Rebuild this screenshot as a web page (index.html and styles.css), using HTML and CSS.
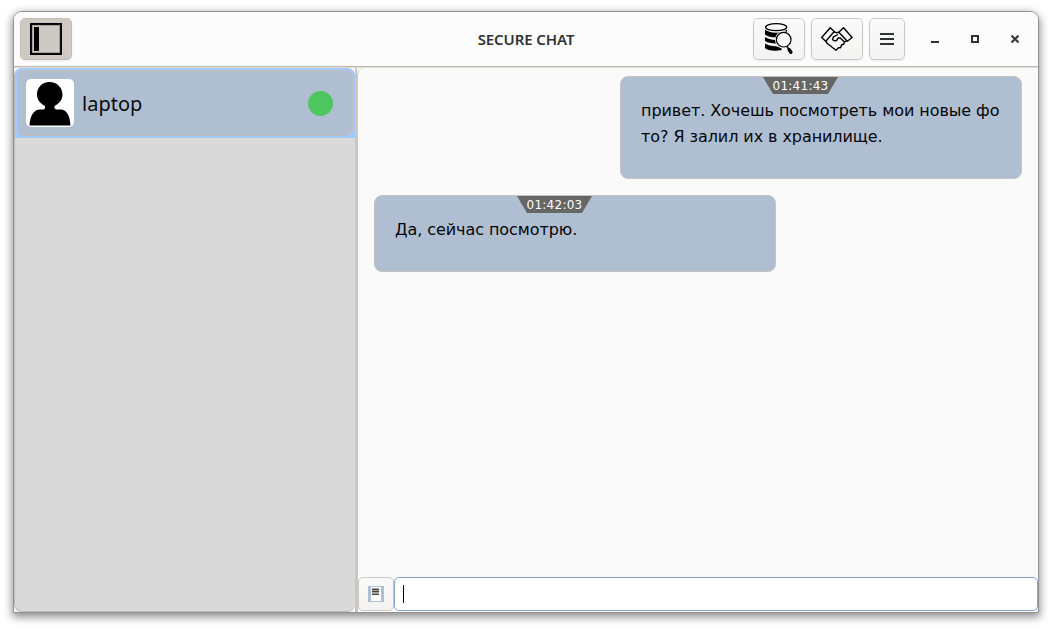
FILE: index.html
```html
<!DOCTYPE html>
<html lang="ru">
<head>
<meta charset="utf-8">
<title>Secure Chat</title>
<link rel="stylesheet" href="styles.css">
</head>
<body>
<div class="window">
  <header class="header">
    <div class="side start">
      <button class="btn active" aria-label="Sidebar">
        <svg width="32" height="32" viewBox="0 0 32 32"><path fill="none" stroke="#000" stroke-width="2" d="M1 1h30v30H1z"/><path fill="none" stroke="#77736f" stroke-width=".6" d="M2.3 2.3h27.4v27.4H2.3z"/><path d="M4 4h5v24H4z"/></svg>
      </button>
    </div>
    <h1 class="title">SECURE CHAT</h1>
    <div class="side end">
      <button class="btn" aria-label="Storage">
        <svg width="32" height="34" viewBox="0 0 32 34"><path d="M2 7.500c2 2 6 3.200 11 3.200s9-1.200 11-3.200v5l-10 3C8 15.500 4 14.500 2 12.500zM2 15c2 1.500 6 3 11 3v3.500C8 21.500 4 20.500 2 19zM2 21.500c2 1.500 6 2.500 12 3l4 1.500 1 2c-7 1.500-15 .5-17-2z"/><ellipse cx="13.200" cy="5.200" rx="10.500" ry="3.500" fill="#faf9f8" stroke="#000" stroke-width="1.300"/><circle cx="20.700" cy="17.700" r="8.700" fill="#faf9f8"/><circle cx="20.700" cy="17.700" r="7.300" fill="#faf9f8" stroke="#000" stroke-width="1.200"/><path stroke="#000" stroke-width="1.400" d="M24 24.500l2 3"/><path stroke="#000" stroke-width="3.400" stroke-linecap="round" d="M26.200 27.700l1.700 2.600"/></svg>
      </button>
      <button class="btn" aria-label="Connect">
        <svg width="32" height="32" viewBox="0 0 32 32" fill="none" stroke="#000" stroke-width="1.400" stroke-linejoin="round"><path d="M9.200 4.700l4.100 3.800-8.600 9.800-4-3.800zM22.500 4.700l-4.700 4.500 8.500 9.100 4.800-3.800zM13.300 9l2.200.7 2.800-.7M5.500 17.500v2.300l1.800 1.500L15 27.300l2.500-2.500h2l1.200-3 2-.5.800-2.500 2.500-1.300M17 11.500l-4.500 2.300-1 2.700 1.500 1.300 2.500-.300 1.700-2.500h2l4.300 4"/></svg>
      </button>
      <button class="btn narrow" aria-label="Menu">
        <svg width="14" height="12" viewBox="0 0 14 12"><path fill="#2e3436" d="M0 0h14v2H0zM0 5h14v2H0zM0 10h14v2H0z"/></svg>
      </button>
      <div class="controls">
        <svg width="8" height="8" viewBox="0 0 8 8"><path fill="#2e3436" d="M0 6h8v2H0z"/></svg>
        <svg width="8" height="8" viewBox="0 0 8 8"><path fill="none" stroke="#2e3436" stroke-width="2" d="M1 1h6v6H1z"/></svg>
        <svg width="8" height="8" viewBox="0 0 8 8"><path fill="none" stroke="#2e3436" stroke-width="2" d="M.5.5l7 7M7.500.5l-7 7"/></svg>
      </div>
    </div>
  </header>
  <main class="body">
    <aside class="sidebar">
      <div class="selected">
        <div class="contact">
          <svg class="avatar" width="48" height="48" viewBox="0 0 48 48"><path d="M23.500 3C31 3 36.500 8.500 36.500 15.500c0 5-3 9-8 11.500v2c.5 1 1.500 1.500 3 1.500h3c6 0 9.500 6 10 16h-41c.5-10 4.500-16 10.500-16h2c1.500 0 2.500-.5 3-1.500v-2c-5-2.500-8-6.500-8-11.500C11 8.500 16 3 23.500 3z"/></svg>
          <span class="name">laptop</span>
          <span class="online"></span>
        </div>
      </div>
    </aside>
    <div class="divider"></div>
    <section class="chat">
      <div class="messages">
        <article class="message sent">
          <time class="time">01:41:43</time>
          <p class="text">привет. Хочешь посмотреть мои новые фо<br>то? Я залил их в хранилище.</p>
        </article>
        <article class="message">
          <time class="time">01:42:03</time>
          <p class="text">Да, сейчас посмотрю.</p>
        </article>
      </div>
      <footer class="composer">
        <button class="attach" aria-label="Attach">
          <svg width="16" height="16" viewBox="0 0 16 16"><path fill="#afbfd4" d="M0 0h16v16H0z"/><path fill="#fff" d="M3 1h10v14H3z"/><path fill="#a5a5a3" d="M4 2h7v7H4z"/><path fill="#444" d="M4 3h7v1H4zM4 5h7v1H4zM4 8h7v1H4z"/></svg>
        </button>
        <div class="entry"><span class="caret"></span></div>
      </footer>
    </section>
  </main>
</div>
</body>
</html>
```
FILE: styles.css
```css
* { box-sizing: border-box; }
body { margin: 0; padding: 11px 13px; width: 1052px; height: 629px; overflow: hidden; background: #fff; font-family: "DejaVu Sans", sans-serif; }
button { padding: 0; font: inherit; }
svg { display: block; }
.window { width: 1026px; height: 602px; border: 1px solid #929292; border-radius: 9px 9px 0 0; background: #fafafa; box-shadow: 0 3px 9px 1px rgba(0,0,0,.45); display: flex; flex-direction: column; overflow: hidden; }
.header { height: 55px; margin-bottom: 1px; flex: none; display: flex; align-items: center; background: #fcfcfc; border-bottom: 1px solid #c0b8ae; box-shadow: 0 1px #dfdbd7; padding: 0 19px; }
.side { flex: 1 1 0; display: flex; align-items: center; gap: 6px; }
.start { min-width: 0; }
.start .btn { margin-left: -13px; }
.end { justify-content: flex-end; }
.title { margin: 0; font: 600 15px/20px "Noto Sans", sans-serif; letter-spacing: -.1px; color: #2e3436; }
.btn { width: 52px; height: 42px; border: 1px solid #cdc7c2; border-radius: 5px; background: linear-gradient(#fafafa, #f4f3f2); box-shadow: 0 1px 2px rgba(0,0,0,.07); display: flex; align-items: center; justify-content: center; }
.active { background: #cfc9c3; border-color: #c5bdb5; }
.narrow { width: 36px; }
.controls { display: flex; gap: 32px; padding-left: 20px; }
.body { flex: 1; display: flex; min-height: 0; }
.sidebar { width: 341px; background: #d9d9d9; border: 1px solid #bdb7b0; border-top: 0; border-right: 0; border-radius: 8px; overflow: hidden; }
.selected { height: 70px; padding: 2px; background: #9fc9ff; }
.contact { height: 66px; display: flex; align-items: center; border: 1px solid #c3bebe; border-radius: 7px; background: #b0bed1; padding: 0 19px 0 8px; }
.avatar { background: #fff; border-radius: 5px; }
.name { font: 20px/28px "Noto Sans", sans-serif; margin: 2px 0 0 8px; color: #0a0b0c; }
.online { width: 25px; height: 25px; border-radius: 50%; background: #4dc660; margin-left: auto; }
.divider { width: 2px; background: #cdc7c2; }
.chat { flex: 1; display: flex; flex-direction: column; border-left: 1px solid #cdc7c2; border-radius: 7px 7px 0 0; background: #fafafa; }
.messages { flex: 1; padding: 8px 16px 0; display: flex; flex-direction: column; gap: 16px; }
.message { width: 402px; border: 1px solid #c7c2be; border-radius: 8px; background: #b0bed2; padding-bottom: 28px; }
.sent { align-self: flex-end; }
.time { display: block; width: 75px; height: 17px; margin: 0 0 4px 142px; background: #666; clip-path: polygon(0 0, 100% 0, calc(100% - 10px) 100%, 10px 100%); color: #fff; font-size: 12px; line-height: 18px; text-align: center; letter-spacing: .25px; }
.text { margin: 0; padding-left: 20px; font-size: 16px; line-height: 26px; letter-spacing: -.07px; color: #050607; white-space: nowrap; }
.composer { height: 35px; display: flex; }
.attach { width: 36px; height: 34px; border: 1px solid #cdc7c2; border-radius: 5px; background: linear-gradient(#fafafa, #f4f3f2); display: flex; align-items: center; justify-content: center; }
.entry { flex: 1; height: 34px; border: 1px solid #80a3d2; border-radius: 5px; background: #fff; padding: 7px 8px; }
.caret { display: block; width: 1px; height: 18px; background: #000; }
```
